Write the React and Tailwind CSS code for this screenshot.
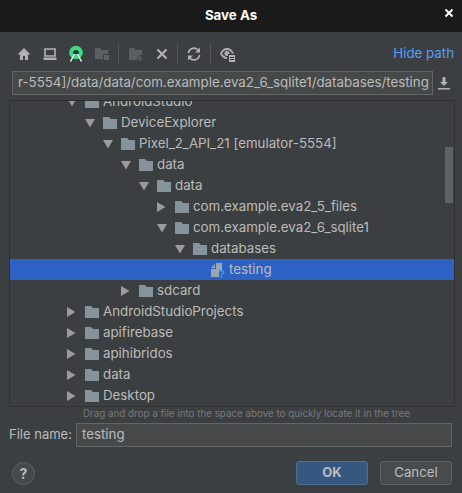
const FONT = "font-['Inter','Liberation_Sans',sans-serif]";

const rows = [
  { depth: 0, name: 'AndroidStudio', open: true },
  { depth: 1, name: 'DeviceExplorer', open: true },
  { depth: 2, name: 'Pixel_2_API_21 [emulator-5554]', open: true },
  { depth: 3, name: 'data', open: true },
  { depth: 4, name: 'data', open: true },
  { depth: 5, name: 'com.example.eva2_5_files' },
  { depth: 5, name: 'com.example.eva2_6_sqlite1', open: true },
  { depth: 6, name: 'databases', open: true },
  { depth: 7, name: 'testing', file: true, selected: true },
  { depth: 3, name: 'sdcard' },
  { depth: 0, name: 'AndroidStudioProjects' },
  { depth: 0, name: 'apifirebase' },
  { depth: 0, name: 'apihibridos' },
  { depth: 0, name: 'data' },
  { depth: 0, name: 'Desktop' },
];

function Folder() {
  return (
    <svg width="14" height="12" viewBox="0 0 14 12" className="shrink-0">
      <path d="M0 0h6l2 2h6v10H0z" fill="#87939a" />
    </svg>
  );
}

function Arrow({ open }) {
  return (
    <svg width="10" height="10" viewBox="0 0 10 10" className="shrink-0">
      {open ? <path d="M0 1h10L5 9.5z" fill="#9b9b9b" /> : <path d="M0 0l8.500 5L0 10z" fill="#9b9b9b" />}
    </svg>
  );
}

function FileUnknown() {
  return (
    <svg width="16" height="16" viewBox="0 0 16 16" className="shrink-0">
      <path d="M1 6l4-4v4zM6 1h6v7H9v7H1V7h5z" fill="#9aa7b0" />
      <text x="8.5" y="15.5" fontSize="11" fontWeight="700" fill="#3a9fe8" fontFamily="Inter">?</text>
    </svg>
  );
}

function TreeRow({ depth, name, open, file, selected }) {
  return (
    <div
      className={`flex h-[21px] items-center text-[#bbbbbb] ${selected ? 'bg-[#2d62c4]' : ''}`}
      style={{ paddingLeft: 57 + depth * 18 }}
    >
      <span className="flex w-[10px] shrink-0">{!file && <Arrow open={open} />}</span>
      <span className="ml-[8px] flex w-[14px] justify-center">{file ? <FileUnknown /> : <Folder />}</span>
      <span className="ml-[4px] text-[13.3px] whitespace-nowrap">{name}</span>
    </div>
  );
}

function ToolIcon({ children }) {
  return (
    <svg width="16" height="16" viewBox="0 0 16 16" className="shrink-0">
      {children}
    </svg>
  );
}

function Sep({ className }) {
  return <div className={`h-[20px] w-px shrink-0 bg-[#555759] ${className}`} />;
}

function Toolbar() {
  return (
    <div className="flex h-[22px] items-center pl-[1px]">
      <div className="flex w-[26px] justify-center">
        <ToolIcon><path d="M8 2L1.5 8.5H4V14h3v-4h2v4h3V8.5h2.500z" fill="#afb1b3" /></ToolIcon>
      </div>
      <div className="flex w-[26px] justify-center">
        <ToolIcon>
          <path d="M3 3h10v7H3z" fill="none" stroke="#afb1b3" strokeWidth="1.6" />
          <path d="M1.500 11.500h13V14h-13z" fill="#afb1b3" />
        </ToolIcon>
      </div>
      <div className="flex w-[26px] justify-center">
        <svg width="16" height="18" viewBox="0 0 16 18">
          <circle cx="8" cy="7.500" r="6.800" fill="#3ddc84" />
          <path d="M5 8a3 3 0 0 1 6 0v1H5z" fill="#1f3d3a" />
          <path d="M6.500 9L2.500 16.500M9.500 9l4 7.500" stroke="#e8f0ec" strokeWidth="1.500" />
        </svg>
      </div>
      <div className="flex w-[26px] justify-center">
        <ToolIcon>
          <path d="M1 2h5l1.500 2H14v4H9v5H1z" fill="#5c5f61" />
          <path d="M10 9h5v5h-5z" fill="#5c5f61" />
        </ToolIcon>
      </div>
      <Sep className="ml-[3px]" />
      <div className="ml-[4px] flex w-[26px] justify-center">
        <ToolIcon>
          <path d="M1 2h5l1.500 2H14v5h-3v2H9v3H1z" fill="#5c5f61" />
          <path d="M12 10v5M9.500 12.500h5" stroke="#5c5f61" strokeWidth="1.500" />
        </ToolIcon>
      </div>
      <div className="flex w-[25px] justify-center">
        <ToolIcon><path d="M3.500 3.500l9 9M12.500 3.500l-9 9" stroke="#afb1b3" strokeWidth="2.200" /></ToolIcon>
      </div>
      <Sep className="ml-[3px]" />
      <div className="ml-[3px] flex w-[26px] justify-center">
        <ToolIcon>
          <path d="M2.500 7A5.500 5.500 0 0 1 12.500 4.500M13.500 9A5.500 5.500 0 0 1 3.500 11.500" fill="none" stroke="#afb1b3" strokeWidth="1.800" />
          <path d="M14 1.500V6.500H9zM2 14.500V9.500H7z" fill="#afb1b3" />
        </ToolIcon>
      </div>
      <Sep className="ml-[3px]" />
      <div className="ml-[4px] flex w-[26px] justify-center">
        <svg width="18" height="18" viewBox="0 0 18 18">
          <path d="M1 8.500C2.500 5 5 3 8 3s5.500 2 7 5.500h-2C12 6.300 10.200 5 8 5S4 6.300 3 8.500C4 10.700 6 12 8 12v2c-3 0-5.500-2-7-5.500z" fill="#afb1b3" />
          <circle cx="8" cy="8.500" r="2.500" fill="#afb1b3" />
          <path d="M9 9h8v8H9z" fill="#3c3f41" />
          <path d="M10 10h6v7h-6z" fill="#afb1b3" />
          <path d="M11 12.500h4M11 14.500h4" stroke="#3c3f41" strokeWidth="1" />
        </svg>
      </div>
      <a className="mr-[-2px] ml-auto text-[13.3px] text-[#589df6]">Hide path</a>
    </div>
  );
}

export default function App() {
  return (
    <div className={`flex h-[493px] w-[462px] flex-col overflow-hidden bg-[#3c3f41] ${FONT}`}>
      <div className="relative flex h-[32px] shrink-0 items-center justify-center bg-[#1a1a1a] text-[13.3px] font-bold text-white">
        Save As
        <svg width="10" height="10" viewBox="0 0 10 10" className="absolute top-[8px] right-[8px]">
          <path d="M1.500 1.500l7 7M8.500 1.500l-7 7" stroke="#fff" strokeWidth="2" />
        </svg>
      </div>

      <div className="flex flex-1 flex-col px-[10px]">
        <div className="mt-[11px]"><Toolbar /></div>

        <div className="mt-[6px] flex items-center">
          <div className="ml-[2px] flex h-[24px] w-[424px] items-center overflow-hidden border border-[#646464] bg-[#45494a] pl-[5px] text-[13.3px] whitespace-nowrap text-[#bbbbbb]">
            r-5554]/data/data/com.example.eva2_6_sqlite1/databases/testing
          </div>
          <svg width="16" height="16" viewBox="0 0 16 16" className="ml-[3px]">
            <path d="M6.500 2h3v5H12L8 11 4 7h2.500z" fill="#afb1b3" />
            <path d="M2 13h12v1.600H2z" fill="#afb1b3" />
          </svg>
        </div>

        <div className="relative mt-[5px] -mr-[3px] -ml-[1px] h-[307px] overflow-hidden border border-[#323232]">
          <div className="-mt-[10px]">
            {rows.map((r, i) => (
              <TreeRow key={i} {...r} />
            ))}
          </div>
          <div className="absolute top-[46px] right-[1px] h-[56px] w-[8px] bg-[#5f6163]" />
        </div>

        <div className="mt-[1px] pl-[73px] text-[9.8px] leading-[11px] whitespace-nowrap text-[#787878]">
          Drag and drop a file into the space above to quickly locate it in the tree
        </div>

        <div className="mt-[4px] flex items-center">
          <span className="ml-[-1px] text-[13px] text-[#bbbbbb]">File name:</span>
          <div className="ml-auto flex h-[24px] w-[376px] items-center border border-[#646464] bg-[#45494a] pl-[5px] text-[13.3px] text-[#bbbbbb]">
            testing
          </div>
        </div>

        <div className="mt-[14px] flex items-center">
          <div className="ml-[2px] flex h-[23px] w-[23px] items-center justify-center rounded-full border border-[#5e6060] bg-[#46494b] text-[14px] font-bold text-[#bbbbbb]">
            ?
          </div>
          <button className="ml-auto h-[24px] w-[72px] rounded-[3px] border border-[#4c708c] bg-[#365880] text-[13px] font-bold text-[#bbbbbb]">
            OK
          </button>
          <button className="ml-[12px] h-[24px] w-[72px] rounded-[3px] border border-[#5e6060] bg-[#494c4e] text-[13.3px] text-[#bbbbbb]">
            Cancel
          </button>
        </div>
      </div>
    </div>
  );
}
